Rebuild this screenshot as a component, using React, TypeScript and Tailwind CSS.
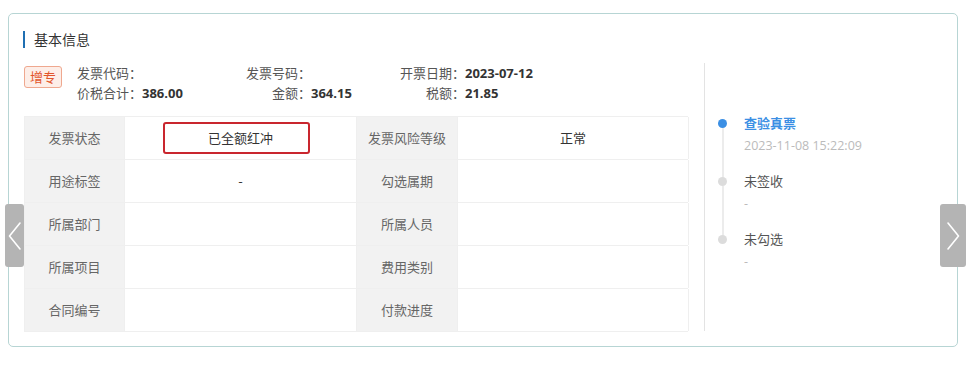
import React from 'react';

const font = { fontFamily: '"Noto Sans CJK SC", "Open Sans", sans-serif' };

const rows: [string, React.ReactNode, string, React.ReactNode][] = [
  [
    '发票状态',
    <span className="inline-flex items-center justify-center w-[147px] h-[32px] mr-[9px] pl-[9px] border-2 border-[#c9262e] rounded-[3px]">已全额红冲</span>,
    '发票风险等级',
    '正常',
  ],
  ['用途标签', '-', '勾选属期', ''],
  ['所属部门', '', '所属人员', ''],
  ['所属项目', '', '费用类别', ''],
  ['合同编号', '', '付款进度', ''],
];

const timeline = [
  { title: '查验真票', sub: '2023-11-08 15:22:09', active: true },
  { title: '未签收', sub: '-', active: false },
  { title: '未勾选', sub: '-', active: false },
];

function Chevron({ dir }: { dir: 'left' | 'right' }) {
  return (
    <svg width="14" height="28" viewBox="0 0 14 28" fill="none">
      <path
        d={dir === 'left' ? 'M12 1 L1.5 14 L12 27' : 'M2 1 L12.5 14 L2 27'}
        stroke="white"
        strokeWidth="1.6"
        strokeLinecap="round"
        strokeLinejoin="round"
      />
    </svg>
  );
}

export default function App() {
  return (
    <div className="relative w-[969px] h-[381px] bg-white pt-[13px] pl-[8px]" style={font}>
      <div className="w-[950px] h-[334px] border border-[#b7d5d4] rounded-[5px] pt-[16px] pl-[14px]">
        {/* title */}
        <div className="flex items-center h-[18px]">
          <div className="w-[2px] h-[17px] bg-[#1f6fb2]" />
          <span className="ml-[9px] text-[14px] text-[#333] leading-none">基本信息</span>
        </div>

        <div className="flex mt-[15px]">
          <div className="w-[681px] pl-[1px]">
            {/* invoice summary */}
            <div className="flex h-[40px]">
              <div className="mt-[3px] w-[38px] h-[22px] flex items-center justify-center border border-[#efa88f] bg-[#fdeee8] rounded-[3px] text-[13px] text-[#e2552b]">
                增专
              </div>
              <div className="ml-[15px] grid grid-cols-[169px_154px_200px] text-[13px] leading-[20px]">
                <div className="flex"><span className="w-[65px] text-[#555]">发票代码：</span></div>
                <div className="flex"><span className="w-[65px] text-right text-[#555]">发票号码：</span></div>
                <div className="flex">
                  <span className="w-[65px] text-right text-[#555]">开票日期：</span>
                  <span className="font-bold text-[#333]" style={{ fontFamily: '"Open Sans", sans-serif' }}>2023-07-12</span>
                </div>
                <div className="flex">
                  <span className="w-[65px] text-[#555]">价税合计：</span>
                  <span className="font-bold text-[#333]" style={{ fontFamily: '"Open Sans", sans-serif' }}>386.00</span>
                </div>
                <div className="flex">
                  <span className="w-[65px] text-right text-[#555]">金额：</span>
                  <span className="font-bold text-[#333]" style={{ fontFamily: '"Open Sans", sans-serif' }}>364.15</span>
                </div>
                <div className="flex">
                  <span className="w-[65px] text-right text-[#555]">税额：</span>
                  <span className="font-bold text-[#333]" style={{ fontFamily: '"Open Sans", sans-serif' }}>21.85</span>
                </div>
              </div>
            </div>

            {/* detail table */}
            <div className="mt-[13px] w-[664px] border-t border-l border-[#efefef] text-[13px]">
              {rows.map(([l1, v1, l2, v2], i) => (
                <div key={i} className="grid grid-cols-[100px_232px_101px_231px] h-[43px] border-b border-[#efefef]">
                  <div className="bg-[#f2f2f2] flex items-center justify-center text-[#666] border-r border-[#efefef]">{l1}</div>
                  <div className="flex items-center justify-center text-[#333] border-r border-[#efefef]">{v1}</div>
                  <div className="bg-[#f2f2f2] flex items-center justify-center text-[#666] border-r border-[#efefef]">{l2}</div>
                  <div className="flex items-center justify-center text-[#333] border-r border-[#efefef]">{v2}</div>
                </div>
              ))}
            </div>
          </div>

          {/* timeline */}
          <div className="w-[240px] h-[268px] border-l border-[#e3e3e3] pt-[50px] pl-[13px]">
            {timeline.map((t, i) => (
              <div key={i} className="relative flex h-[58px]">
                <div className="relative w-[26px] shrink-0">
                  <div className={`absolute left-0 top-[6px] w-[9px] h-[9px] rounded-full ${t.active ? 'bg-[#3b8fe4]' : 'bg-[#dcdcdc]'}`} />
                  {i < timeline.length - 1 && (
                    <div className="absolute left-[3.5px] top-[15px] w-[2px] h-[50px] bg-[#ececec]" />
                  )}
                </div>
                <div className="text-[13px] leading-[20px]">
                  <div className={t.active ? 'text-[#3b8fe4] font-bold' : 'text-[#555]'}>{t.title}</div>
                  <div className="mt-[3px] text-[12.5px] text-[#bbb]" style={{ fontFamily: '"Open Sans", "Noto Sans CJK SC", sans-serif' }}>{t.sub}</div>
                </div>
              </div>
            ))}
          </div>
        </div>
      </div>

      {/* carousel arrows */}
      <div className="absolute left-[5px] top-[204px] w-[19px] h-[63px] bg-[#b4b4b4] rounded-[3px] flex items-center justify-center">
        <Chevron dir="left" />
      </div>
      <div className="absolute left-[940px] top-[204px] w-[26px] h-[63px] bg-[#b4b4b4] rounded-[3px] flex items-center justify-center">
        <Chevron dir="right" />
      </div>
    </div>
  );
}
